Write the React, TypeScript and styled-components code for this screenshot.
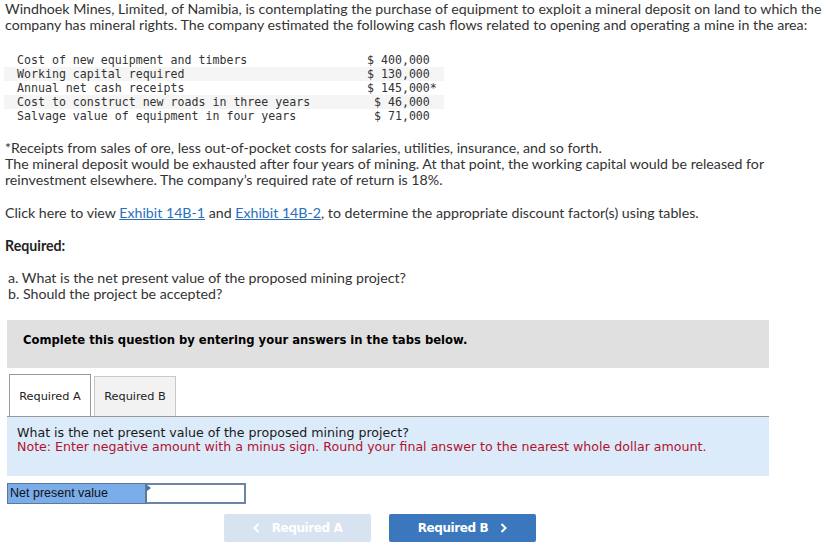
import React from 'react';
import styled, { createGlobalStyle } from 'styled-components';

const Global = createGlobalStyle`
  body {
    margin: 0;
    background: #fff;
  }
`

const Page = styled.div`
  padding: 1px 0 0 5px;
  font-family: 'Lato', 'Open Sans', sans-serif;
  font-size: 14.2px;
  line-height: 16px;
  color: #333;
`

const Para = styled.p<{ $gap?: number }>`
  margin: ${p => p.$gap ?? 0}px 0 0 0;
`

const Link = styled.a`
  color: #2a6fbe;
  text-decoration: underline;
  text-decoration-color: #2a6fbe;
`

const Bold = styled.p`
  margin: 17px 0 0 0;
  font-weight: 700;
  color: #222;
`

const List = styled.div`
  margin-top: 16px;
  padding-left: 3px;
`

const Table = styled.table`
  margin: 20px 0 0 -1px;
  border-collapse: collapse;
  font-family: 'DejaVu Sans Mono', 'Liberation Mono', monospace;
  font-size: 11.6px;
  color: #333;
`

const Row = styled.tr<{ $band?: boolean }>`
  height: 14px;
  background: ${p => (p.$band ? '#f5f5f5' : 'transparent')};
`

const Label = styled.td`
  padding: 0 0 0 13px;
  width: 350px;
  white-space: pre;
  line-height: 14px;
`

const Amount = styled.td`
  padding: 0 7px 0 0;
  width: 70px;
  white-space: pre;
  line-height: 14px;
`

const Banner = styled.div`
  margin: 18px 0 0 2px;
  width: 762px;
  height: 48px;
  box-sizing: border-box;
  padding: 12px 0 0 16px;
  background: #e0e0e0;
  font-family: 'DejaVu Sans', Verdana, sans-serif;
  font-weight: 700;
  font-size: 11.6px;
  color: #000;
`

const Tabs = styled.div`
  margin: 6px 0 0 2px;
  width: 762px;
  display: flex;
  align-items: flex-end;
  gap: 3px;
  padding-left: 2px;
  box-sizing: border-box;
  border-bottom: 1px solid #999;
`

const Tab = styled.div<{ $active?: boolean }>`
  width: 82px;
  height: ${p => (p.$active ? 42 : 40)}px;
  box-sizing: border-box;
  display: flex;
  align-items: center;
  justify-content: center;
  padding-top: ${p => (p.$active ? 2 : 0)}px;
  border: 1px solid ${p => (p.$active ? '#999' : '#c8c8c8')};
  border-bottom: none;
  background: ${p => (p.$active ? '#fff' : '#f2f2f2')};
  font-family: 'DejaVu Sans', Verdana, sans-serif;
  font-size: 11.3px;
  color: #222;
`

const Panel = styled.div`
  margin-left: 2px;
  width: 762px;
  height: 59px;
  box-sizing: border-box;
  padding: 9px 0 0 10px;
  background: #dbebf9;
  font-family: 'DejaVu Sans', Verdana, sans-serif;
  font-size: 12.6px;
  line-height: 14px;
  color: #1a1a1a;
`

const Note = styled.div`
  color: #b3122e;
`

const AnswerRow = styled.div`
  margin: 7px 0 0 2px;
  display: flex;
  height: 21px;
`

const AnswerLabel = styled.div`
  width: 140px;
  box-sizing: border-box;
  border: 1px solid #5f7898;
  border-right: 2px solid #5f7898;
  background: #7badea;
  padding: 1px 0 0 2px;
  font-family: 'Liberation Sans', Arial, sans-serif;
  font-size: 12.5px;
  line-height: 17px;
  color: #111;
`

const AnswerInput = styled.div`
  position: relative;
  width: 99px;
  box-sizing: border-box;
  border: 2px solid #6c84a3;
  border-left: none;
  background: #fff;
`

const Marker = styled.span`
  position: absolute;
  top: 0;
  left: 0;
  width: 0;
  height: 0;
  border-top: 3px solid transparent;
  border-bottom: 3px solid transparent;
  border-left: 4px solid #3d74b8;
`

const Nav = styled.div`
  margin: 10px 0 0 2px;
  width: 762px;
  display: flex;
  justify-content: center;
  gap: 18px;
  padding-right: 16px;
  box-sizing: border-box;
`

const NavButton = styled.div<{ $disabled?: boolean }>`
  width: 147px;
  height: 28px;
  display: flex;
  align-items: center;
  justify-content: center;
  gap: 12px;
  border-radius: 2px;
  background: ${p => (p.$disabled ? '#d7e3f0' : '#3a77bc')};
  color: #fff;
  font-family: 'DejaVu Sans', Verdana, sans-serif;
  font-weight: 700;
  font-size: 12px;
  letter-spacing: -0.4px;
`

const Chevron = ({ dir }: { dir: 'left' | 'right' }) => (
  <svg width="7" height="10" viewBox="0 0 7 10">
    <path
      d={dir === 'left' ? 'M5.5 1 L1.5 5 L5.5 9' : 'M1.5 1 L5.5 5 L1.5 9'}
      fill="none"
      stroke="#fff"
      strokeWidth="2"
    />
  </svg>
)

const rows = [
  ['Cost of new equipment and timbers', '$ 400,000'],
  ['Working capital required', '$ 130,000'],
  ['Annual net cash receipts', '$ 145,000*'],
  ['Cost to construct new roads in three years', ' $ 46,000'],
  ['Salvage value of equipment in four years', ' $ 71,000'],
]

export default function App() {
  return (
    <Page>
      <Global />
      <Para>
        Windhoek Mines, Limited, of Namibia, is contemplating the purchase of equipment to exploit a mineral deposit on land to which the
        company has mineral rights. The company estimated the following cash flows related to opening and operating a mine in the area:
      </Para>

      <Table>
        <tbody>
          {rows.map((r, i) => (
            <Row key={r[0]} $band={i % 2 === 1}>
              <Label>{r[0]}</Label>
              <Amount>{r[1]}</Amount>
            </Row>
          ))}
        </tbody>
      </Table>

      <Para $gap={17}>
        *Receipts from sales of ore, less out-of-pocket costs for salaries, utilities, insurance, and so forth.
        <br />
        The mineral deposit would be exhausted after four years of mining. At that point, the working capital would be released for
        reinvestment elsewhere. The company’s required rate of return is 18%.
      </Para>

      <Para $gap={17}>
        Click here to view <Link>Exhibit 14B-1</Link> and <Link>Exhibit 14B-2</Link>, to determine the appropriate discount factor(s) using tables.
      </Para>

      <Bold>Required:</Bold>

      <List>
        <div>a. What is the net present value of the proposed mining project?</div>
        <div>b. Should the project be accepted?</div>
      </List>

      <Banner>Complete this question by entering your answers in the tabs below.</Banner>

      <Tabs>
        <Tab $active>Required A</Tab>
        <Tab>Required B</Tab>
      </Tabs>

      <Panel>
        <div>What is the net present value of the proposed mining project?</div>
        <Note>Note: Enter negative amount with a minus sign. Round your final answer to the nearest whole dollar amount.</Note>
      </Panel>

      <AnswerRow>
        <AnswerLabel>Net present value</AnswerLabel>
        <AnswerInput>
          <Marker />
        </AnswerInput>
      </AnswerRow>

      <Nav>
        <NavButton $disabled>
          <Chevron dir="left" />
          <span>Required A</span>
        </NavButton>
        <NavButton>
          <span>Required B</span>
          <Chevron dir="right" />
        </NavButton>
      </Nav>
    </Page>
  );
}
